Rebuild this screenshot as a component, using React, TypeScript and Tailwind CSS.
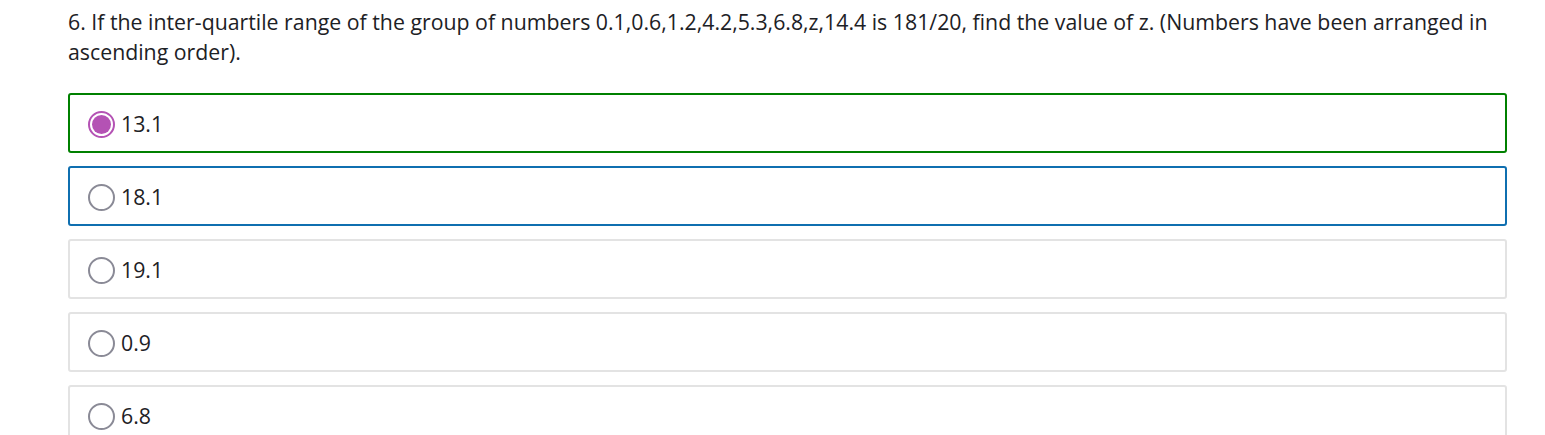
import React from "react";

const options = [
  { label: "13.1", state: "selected" },
  { label: "18.1", state: "focus" },
  { label: "19.1", state: "none" },
  { label: "0.9", state: "none" },
  { label: "6.8", state: "none" },
];

function Radio({ checked }: { checked: boolean }) {
  if (checked) {
    return (
      <span className="flex h-[27px] w-[27px] shrink-0 items-center justify-center rounded-full border-2 border-[#b452b4] bg-white">
        <span className="h-[19px] w-[19px] rounded-full bg-[#b452b4]" />
      </span>
    );
  }
  return <span className="h-[27px] w-[27px] shrink-0 rounded-full border-2 border-[#8a8a96] bg-white" />;
}

export default function App() {
  return (
    <div className="min-h-[435px] bg-white text-[#1d2125]" style={{ fontFamily: '"Open Sans", "Noto Sans", sans-serif' }}>
      <div className="ml-[68px] w-[1439px] pt-[7px]">
        <p className="text-[21.3px] leading-[30px]">
          6. If the inter-quartile range of the group of numbers 0.1,0.6,1.2,4.2,5.3,6.8,z,14.4 is 181/20, find the value of z. (Numbers have been arranged in ascending order).
        </p>
        <div className="mt-[26px] flex flex-col gap-[13px]">
          {options.map((o) => (
            <div
              key={o.label}
              className={
                "flex h-[60px] items-center gap-[6px] rounded-[3px] border-2 pl-[18px] pt-[2px] " +
                (o.state === "selected"
                  ? "border-[#008000]"
                  : o.state === "focus"
                  ? "border-[#0f6fb0]"
                  : "border-[#e3e3e3]")
              }
            >
              <Radio checked={o.state === "selected"} />
              <span className="text-[21.3px] leading-[30px]">{o.label}</span>
            </div>
          ))}
        </div>
      </div>
    </div>
  );
}
